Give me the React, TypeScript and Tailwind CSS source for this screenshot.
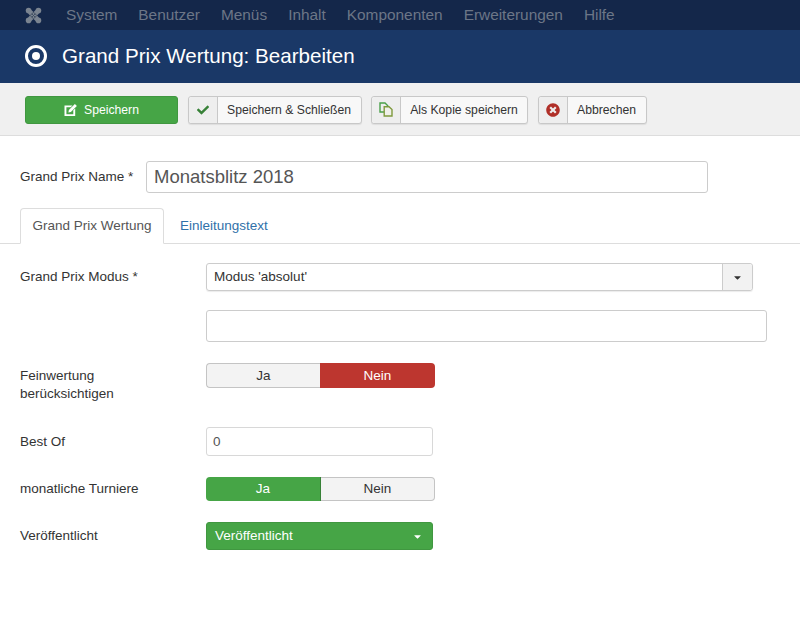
import React from 'react';
import { FaCaretDown, FaCheck, FaTimesCircle } from 'react-icons/fa';

const navItems = ['System', 'Benutzer', 'Menüs', 'Inhalt', 'Komponenten', 'Erweiterungen', 'Hilfe'];

const JoomlaLogo = () => (
  <svg viewBox="0 0 18 18" className="w-[17px] h-[17px]">
    <path d="M5 5 L13 13 M13 5 L5 13" stroke="#7b8490" strokeWidth="5" fill="none" />
    <circle cx="3.8" cy="3.8" r="3" fill="#7b8490" />
    <circle cx="14.2" cy="3.8" r="3" fill="#7b8490" />
    <circle cx="3.8" cy="14.2" r="3" fill="#7b8490" />
    <circle cx="14.2" cy="14.2" r="3" fill="#7b8490" />
    <path d="M5.5 9 L9 5.5 L12.5 9 L9 12.5 Z M7.2 7.2 L10.8 10.8 M10.8 7.2 L7.2 10.8" stroke="#3f4c60" strokeWidth="1" fill="none" />
  </svg>
);

const EditIcon = () => (
  <svg viewBox="0 0 14 14" className="w-[14px] h-[14px]">
    <path d="M.5 2.5 H8.5 L6.7 4.3 H2.4 V11.2 H9.3 V7.3 L11.2 5.4 V13.1 H.5 Z" fill="#fff" />
    <path d="M4.4 9.6 L4.9 7.1 L10.9 1.1 L12.9 3.1 L6.9 9.1 Z" fill="#fff" />
  </svg>
);

const CopyIcon = () => (
  <svg viewBox="0 0 14 15" className="w-[14px] h-[15px]" fill="none" strokeWidth="1.4">
    <path d="M1 1 H6 L8.8 3.8 V10 H1 Z" stroke="#4aa04a" />
    <path d="M5.2 4.8 H10 L13 7.6 V14 H5.2 Z" fill="#f0f0ea" stroke="#7f9a3e" />
  </svg>
);

type ToolButtonProps = { icon: React.ReactNode; label: string; textWidth: string };

const ToolButton = ({ icon, label, textWidth }: ToolButtonProps) => (
  <button
    type="button"
    className="h-[28px] flex items-stretch rounded-[3px] border border-[#c8c8c8] bg-[#f8f8f8] text-[12.2px] text-[#333] shadow-[0_1px_1px_rgba(0,0,0,0.08)]"
  >
    <span className="w-[29px] flex items-center justify-center bg-[#eeeeee] border-r border-[#c8c8c8] rounded-l-[3px]">
      {icon}
    </span>
    <span className={`flex items-center justify-center pt-[2px] ${textWidth}`}>{label}</span>
  </button>
);

export default function App() {
  return (
    <div className="w-[800px] h-[633px] overflow-hidden bg-white font-['Liberation_Sans',Arial,sans-serif] text-[13.5px] text-[#333]">
      <nav className="h-[30px] bg-[#14274a] flex items-center pl-[25px]">
        <JoomlaLogo />
        <div className="flex gap-[21px] ml-[24px] text-[15.4px] text-[#6c7687]">
          {navItems.map((item) => (
            <span key={item}>{item}</span>
          ))}
        </div>
      </nav>

      <header className="h-[53px] bg-[#1a3867] flex items-center pl-[25px] pb-[1px] text-white">
        <span className="w-[22px] h-[22px] rounded-full border-[3px] border-white flex items-center justify-center">
          <span className="w-[8px] h-[8px] rounded-full bg-white" />
        </span>
        <h1 className="ml-[15px] text-[20.6px] font-normal">Grand Prix Wertung: Bearbeiten</h1>
      </header>

      <div className="h-[53px] bg-[#f0f0f0] border-b border-[#dddddd] flex items-center pl-[25px] pt-[1px] gap-[9.5px]">
        <button
          type="button"
          className="w-[153px] h-[28px] rounded-[3px] bg-[#46a546] border border-[#409740] text-white text-[12.2px] flex items-center justify-center gap-[6px]"
        >
          <EditIcon />
          <span className="pt-[2px]">Speichern</span>
        </button>
        <ToolButton icon={<FaCheck className="w-[12px] h-[12px] text-[#378137]" />} label="Speichern & Schließen" textWidth="w-[143px]" />
        <ToolButton icon={<CopyIcon />} label="Als Kopie speichern" textWidth="w-[126px]" />
        <ToolButton icon={<FaTimesCircle className="w-[14px] h-[14px] text-[#b02f28]" />} label="Abbrechen" textWidth="w-[78px]" />
      </div>

      <main className="pt-[25px]">
        <div className="flex items-center pl-[20px]">
          <label className="w-[126px]">Grand Prix Name *</label>
          <input
            readOnly
            value="Monatsblitz 2018"
            className="w-[562px] h-[32px] px-[7px] rounded-[3px] border border-[#cccccc] text-[18.5px] text-[#555] outline-none"
          />
        </div>

        <div className="mt-[15px] h-[36px] border-b border-[#dddddd] flex pl-[20px]">
          <div className="w-[144px] h-[36px] flex items-center justify-center bg-white border border-[#dddddd] border-b-white rounded-t-[4px] text-[#555]">
            Grand Prix Wertung
          </div>
          <div className="ml-[16px] h-[35px] pt-[1px] flex items-center text-[#3071a9]">Einleitungstext</div>
        </div>

        <div className="mt-[19px] pl-[20px] flex items-start">
          <label className="w-[186px] h-[28px] flex items-center">Grand Prix Modus *</label>
          <div className="w-[547px] h-[28px] flex rounded-[3px] border border-[#cccccc] shadow-[0_1px_1px_rgba(0,0,0,0.08)]">
            <span className="flex-1 flex items-center px-[7px]">Modus 'absolut'</span>
            <span className="w-[30px] flex items-center justify-center bg-[#f2f2f2] border-l border-[#cccccc] rounded-r-[3px]">
              <FaCaretDown className="w-[11px] h-[11px]" />
            </span>
          </div>
        </div>

        <div className="mt-[19px] pl-[206px]">
          <input readOnly className="block w-[561px] h-[32px] rounded-[3px] border border-[#cccccc] outline-none" />
        </div>

        <div className="mt-[21px] pl-[20px] flex items-start">
          <label className="w-[186px] leading-[18px] pt-[4px]">
            Feinwertung
            <br />
            berücksichtigen
          </label>
          <div className="flex h-[25px] w-[229px] text-center">
            <span className="w-[114px] pt-[1px] flex items-center justify-center bg-[#f3f3f3] border border-[#c4c4c4] border-r-0 rounded-l-[4px]">Ja</span>
            <span className="flex-1 pt-[1px] flex items-center justify-center bg-[#bd362f] text-white rounded-r-[4px]">Nein</span>
          </div>
        </div>

        <div className="mt-[24px] pl-[20px] flex items-center">
          <label className="w-[186px] pt-[1px]">Best Of</label>
          <input
            readOnly
            value="0"
            className="w-[227px] h-[29px] px-[6px] rounded-[3px] border border-[#d8d8d8] text-[#555] outline-none"
          />
        </div>

        <div className="mt-[21px] pl-[20px] flex items-center">
          <label className="w-[186px]">monatliche Turniere</label>
          <div className="flex h-[24px] w-[229px]">
            <span className="w-[115px] flex items-center justify-center bg-[#46a546] text-white rounded-l-[4px] border-r border-[#378137]">Ja</span>
            <span className="flex-1 flex items-center justify-center bg-[#f3f3f3] border border-[#c4c4c4] border-l-0 rounded-r-[4px]">Nein</span>
          </div>
        </div>

        <div className="mt-[21px] pl-[20px] flex items-center">
          <label className="w-[186px] pt-[1px]">Veröffentlicht</label>
          <div className="w-[227px] h-[28px] flex items-center justify-between pl-[8px] pr-[9px] rounded-[3px] bg-[#46a546] border border-[#409740] text-white">
            <span className="pt-[1px]">Veröffentlicht</span>
            <FaCaretDown className="w-[11px] h-[11px]" />
          </div>
        </div>
      </main>
    </div>
  );
}
